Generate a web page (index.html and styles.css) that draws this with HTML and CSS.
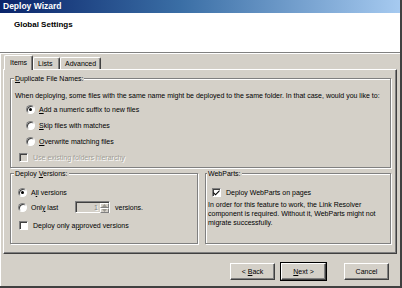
FILE: index.html
```html
<!DOCTYPE html>
<html>
<head>
  <meta charset="utf-8">
  <title>Deploy Wizard</title>
  <link rel="stylesheet" href="styles.css">
</head>
<body>
  <div class="window">
    <div class="titlebar">Deploy Wizard</div>
    <div class="header">
      <h1>Global Settings</h1>
    </div>

    <div class="content">
      <div class="tabs">
        <div class="tab active">Items</div>
        <div class="tab">Lists</div>
        <div class="tab">Advanced</div>
      </div>

      <div class="panel">
        <fieldset class="group dup">
          <legend><u>D</u>uplicate File Names:</legend>
          <p class="intro">When deploying, some files with the same name might be deployed to the same folder. In that case, would you like to:</p>
          <div class="opt indent"><span class="radio checked"></span><span><u>A</u>dd a numeric suffix to new files</span></div>
          <div class="opt indent"><span class="radio"></span><span><u>S</u>kip files with matches</span></div>
          <div class="opt indent"><span class="radio"></span><span><u>O</u>verwrite matching files</span></div>
          <div class="opt check-row disabled"><span class="check"></span><span>Use existing folders hierarchy</span></div>
        </fieldset>

        <div class="row">
          <fieldset class="group versions">
            <legend>Deploy <u>V</u>ersions:</legend>
            <div class="opt"><span class="radio checked"></span><span>A<u>l</u>l versions</span></div>
            <div class="opt short">
              <span class="radio"></span><span class="only-last">Onl<u>y</u> last</span>
              <span class="spin">
                <span class="spin-value">1</span>
                <span class="spin-btns">
                  <span class="spin-btn"><svg width="5" height="3" viewBox="0 0 5 3"><path d="M2.5 0 L5 3 L0 3 Z" fill="#9a978f"/></svg></span>
                  <span class="spin-btn"><svg width="5" height="3" viewBox="0 0 5 3"><path d="M0 0 L5 0 L2.5 3 Z" fill="#9a978f"/></svg></span>
                </span>
              </span>
              <span class="after-spin">versions.</span>
            </div>
            <div class="opt check-row"><span class="check"></span><span>Deploy only a<u>p</u>proved versions</span></div>
          </fieldset>

          <fieldset class="group webparts">
            <legend>WebParts:</legend>
            <div class="opt check-row">
              <span class="check"><svg width="7" height="7" viewBox="0 0 7 7"><path d="M0.5 3 L2.5 5 L6.5 1 L6.5 2.6 L2.5 6.6 L0.5 4.6 Z" fill="#000"/></svg></span>
              <span>Deploy WebParts on pages</span>
            </div>
            <p class="note">In order for this feature to work, the Link Resolver component is required. Without it, WebParts might not migrate successfully.</p>
          </fieldset>
        </div>
      </div>

      <div class="buttons">
        <button class="btn">&lt; <u>B</u>ack</button>
        <button class="btn default"><u>N</u>ext &gt;</button>
        <button class="btn cancel">Cancel</button>
      </div>
    </div>
  </div>
</body>
</html>
```

FILE: styles.css
```css
body {
  margin: 0;
  padding: 0;
  font-family: 'Liberation Sans', Arial, sans-serif;
  font-size: 7px;
  color: #000;
  background: #d4d0c8;
}

.window {
  width: 402px;
  height: 288px;
  box-sizing: border-box;
  display: flex;
  flex-direction: column;
  background: #d4d0c8;
  border-right: 2px solid #404040;
  border-bottom: 2px solid #404040;
}

.titlebar {
  height: 13px;
  line-height: 13px;
  padding-left: 3px;
  font-size: 8.5px;
  font-weight: bold;
  color: #fff;
  background: linear-gradient(to right, #0a246a 0%, #3a6ea5 45%, #a6caf0 100%);
}

.header {
  height: 39px;
  background: #fff;
  border-bottom: 1px solid #808080;
}

.header h1 {
  margin: 0;
  padding: 7px 0 0 14px;
  font-size: 8px;
  line-height: 10px;
  font-weight: bold;
}

.content {
  flex: 1;
  display: flex;
  flex-direction: column;
  border-top: 1px solid #fff;
  border-left: 1px solid #fff;
}

/* tabs */
.tabs {
  display: flex;
  align-items: flex-end;
  padding: 1px 0 0 3px;
  height: 15px;
  box-sizing: border-box;
  position: relative;
  z-index: 1;
}

.tab {
  box-sizing: border-box;
  height: 12px;
  line-height: 11px;
  padding-left: 4px;
  border-top: 1px solid #fff;
  border-left: 1px solid #fff;
  border-right: 1px solid #404040;
  box-shadow: inset -1px 0 #808080;
  border-radius: 2px 2px 0 0;
  background: #d4d0c8;
}

.tab:nth-child(1) { width: 29px; }
.tab:nth-child(2) { width: 27px; }
.tab:nth-child(3) { width: 41px; }

.tab.active {
  height: 15px;
  margin-bottom: -1px;
  padding-left: 5px;
  line-height: 13px;
}

.panel {
  margin: 0 3px 0 2px;
  padding: 4px 5px 9px 6px;
  border: 1px solid;
  border-color: #fff #404040 #404040 #fff;
  box-shadow: inset -1px -1px #808080;
}

/* group boxes */
.group {
  margin: 0;
  padding: 0 4px 2px 4px;
  border: 1px solid #808080;
  box-shadow: inset 1px 1px #fff, 1px 1px #fff;
  min-width: 0;
}

.group legend {
  padding: 0 1px;
  margin-left: -1px;
  line-height: 9px;
  background: #d4d0c8;
}

.intro {
  margin: 8px 0 0 0;
  line-height: 10px;
  white-space: nowrap;
}

.opt {
  display: flex;
  align-items: center;
  height: 16px;
  gap: 4px;
}

.opt.indent {
  margin-left: 11px;
}

.opt.check-row {
  margin-left: 4px;
  gap: 5px;
}

.dup .check-row {
  margin-top: 0;
}

.opt.disabled {
  color: #a09d96;
  text-shadow: 1px 1px #fff;
}

.radio {
  width: 9px;
  height: 9px;
  box-sizing: border-box;
  border-radius: 50%;
  border: 1px solid;
  border-color: #808080 #fff #fff #808080;
  background: #fff;
  box-shadow: inset 1px 1px #404040;
  display: flex;
  align-items: center;
  justify-content: center;
  flex-shrink: 0;
}

.radio.checked::after {
  content: "";
  width: 3px;
  height: 3px;
  border-radius: 50%;
  background: #000;
}

.check {
  width: 9px;
  height: 9px;
  box-sizing: border-box;
  border: 1px solid;
  border-color: #808080 #fff #fff #808080;
  background: #fff;
  box-shadow: inset 1px 1px #404040;
  display: flex;
  align-items: center;
  justify-content: center;
  flex-shrink: 0;
}

.disabled .check {
  background: #d4d0c8;
}

.row {
  display: flex;
  gap: 7px;
  margin-top: 1px;
}

.row .group {
  flex: 1;
  padding-bottom: 10px;
}

.versions .opt:first-of-type {
  margin-top: 6px;
}

.versions .opt {
  margin-left: 3px;
}

.versions .opt.short {
  height: 14px;
}

.versions .check-row {
  margin-left: 4px;
  margin-top: 3px;
}

.only-last {
  width: 40px;
}

.spin {
  display: flex;
  width: 35px;
  height: 12px;
  box-sizing: border-box;
  border: 1px solid;
  border-color: #808080 #fff #fff #808080;
  box-shadow: inset 1px 1px #404040;
  background: #d4d0c8;
}

.spin-value {
  flex: 1;
  text-align: right;
  padding: 1px 2px 0 0;
  line-height: 9px;
  color: #808080;
  text-shadow: 1px 1px #fff;
}

.spin-btns {
  display: flex;
  flex-direction: column;
  width: 9px;
  padding: 1px 0 0 0;
}

.spin-btn {
  flex: 1;
  display: flex;
  align-items: center;
  justify-content: center;
  background: #d4d0c8;
  border: 1px solid;
  border-color: #fff #808080 #808080 #fff;
}

.after-spin {
  margin-left: 1px;
}

.webparts {
  padding-left: 2px;
}

.webparts .check-row {
  margin-top: 6px;
  margin-left: 4px;
}

.note {
  margin: 0;
  line-height: 9px;
  padding-right: 6px;
}

/* buttons */
.buttons {
  display: flex;
  justify-content: flex-end;
  padding: 9px 11px 0 0;
}

.btn {
  width: 45px;
  height: 17px;
  padding: 0;
  margin-left: 6px;
  font-family: 'Liberation Sans', Arial, sans-serif;
  font-size: 7px;
  color: #000;
  background: #d4d0c8;
  border: 1px solid;
  border-color: #fff #404040 #404040 #fff;
  box-shadow: inset -1px -1px #808080;
}

.btn.default {
  outline: 1px solid #000;
}

.btn.cancel {
  margin-left: 18px;
}
```
